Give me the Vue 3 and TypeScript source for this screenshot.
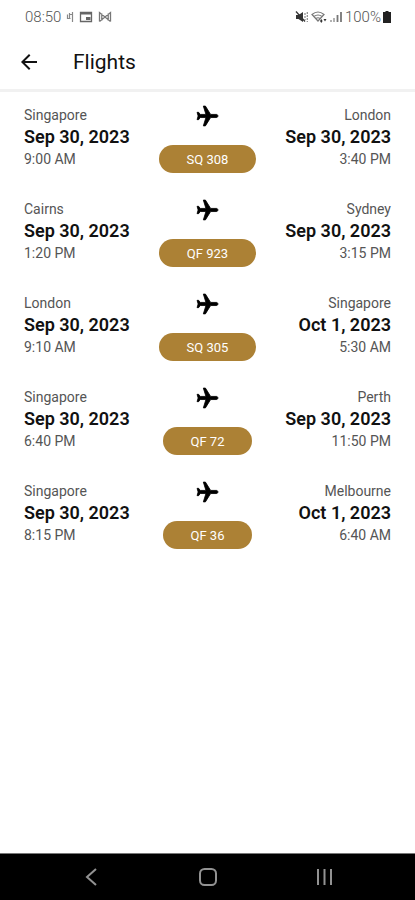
<script setup lang="ts">
interface Stop {
  city: string
  date: string
  time: string
}

interface Flight {
  code: string
  from: Stop
  to: Stop
}

const flights: Flight[] = [
  {
    code: 'SQ 308',
    from: { city: 'Singapore', date: 'Sep 30, 2023', time: '9:00 AM' },
    to: { city: 'London', date: 'Sep 30, 2023', time: '3:40 PM' },
  },
  {
    code: 'QF 923',
    from: { city: 'Cairns', date: 'Sep 30, 2023', time: '1:20 PM' },
    to: { city: 'Sydney', date: 'Sep 30, 2023', time: '3:15 PM' },
  },
  {
    code: 'SQ 305',
    from: { city: 'London', date: 'Sep 30, 2023', time: '9:10 AM' },
    to: { city: 'Singapore', date: 'Oct 1, 2023', time: '5:30 AM' },
  },
  {
    code: 'QF 72',
    from: { city: 'Singapore', date: 'Sep 30, 2023', time: '6:40 PM' },
    to: { city: 'Perth', date: 'Sep 30, 2023', time: '11:50 PM' },
  },
  {
    code: 'QF 36',
    from: { city: 'Singapore', date: 'Sep 30, 2023', time: '8:15 PM' },
    to: { city: 'Melbourne', date: 'Oct 1, 2023', time: '6:40 AM' },
  },
]
</script>

<template>
  <div class="screen">
    <div class="status">
      <div class="status-group">
        <span class="clock">08:50</span>
        <svg class="glyph-narrow" viewBox="0 0 8 14" aria-hidden="true">
          <path d="M1.500 4.500v4h3M3 4.500h3M6.500 2v10M3.500 3v5" fill="none" stroke="#888" stroke-width="1.200" />
        </svg>
        <svg class="glyph" viewBox="0 0 14 14" aria-hidden="true">
          <path d="M1.500 2.500h11v9h-11z" fill="none" stroke="#666" stroke-width="1.300" />
          <path d="M1 2h12v2.500H1zM7 7h4.500v3H7z" fill="#666" />
        </svg>
        <svg class="glyph" viewBox="0 0 14 14" aria-hidden="true">
          <path d="M1.500 11.500v-9L7 7l5.500-4.500v9M1.500 11.500L7 7l5.500 4.500M3.800 3.500v7M10.200 3.500v7" fill="none" stroke="#777" stroke-width="1.300" />
        </svg>
      </div>
      <div class="status-group right">
        <svg class="glyph" viewBox="0 0 14 14" aria-hidden="true">
          <path d="M1 5h2.500L8 2v10L3.500 9H1z" fill="#333" />
          <path d="M1 1.500l9 10" stroke="#333" stroke-width="1.300" />
          <path d="M10 3v7M12.300 2v10" fill="none" stroke="#888" stroke-width="1.200" stroke-dasharray="2 1" />
        </svg>
        <svg class="glyph-wide" viewBox="0 0 16 14" aria-hidden="true">
          <path d="M1 4.500Q7 -0.500 13 4.500L7 11zM3 6.500Q7 3.500 11 6.500M5 8.500Q7 7 9 8.500" fill="none" stroke="#777" stroke-width="1.200" />
          <path d="M9 11l1.300-2 1.300 2-1.300 2zM12.500 9h3l-1.500 2.500z" fill="#333" />
        </svg>
        <svg class="glyph" viewBox="0 0 14 14" aria-hidden="true">
          <path d="M2 12v-2M5 12V8" stroke="#999" stroke-width="1.500" />
          <path d="M8.500 12V5M12 12V2" stroke="#777" stroke-width="1.800" />
        </svg>
        <span class="battery-level">100%</span>
        <svg class="glyph-narrow" viewBox="0 0 8 14" aria-hidden="true">
          <path d="M2.500 1h3v1H8v11H0V2h2.500z" fill="#222" />
        </svg>
      </div>
    </div>

    <header class="app-bar">
      <button class="back" type="button" aria-label="Back">
        <svg viewBox="0 0 24 24" aria-hidden="true">
          <path d="M20 11H7.830l5.590-5.590L12 4l-8 8 8 8 1.410-1.410L7.830 13H20z" fill="#111" />
        </svg>
      </button>
      <h1>Flights</h1>
    </header>

    <main>
      <ul class="flights">
        <li v-for="flight in flights" :key="flight.code" class="flight">
          <div class="stop">
            <span>{{ flight.from.city }}</span>
            <strong>{{ flight.from.date }}</strong>
            <span>{{ flight.from.time }}</span>
          </div>
          <div class="middle">
            <svg class="plane" viewBox="0 0 24 24" aria-hidden="true">
              <path
                transform="rotate(90 12 12)"
                d="M21 16v-2l-8-5V3.500C13 2.670 12.330 2 11.500 2S10 2.670 10 3.500V9l-8 5v2l8-2.500V19l-2 1.500V22l3.500-1 3.500 1v-1.500L13 19v-5.500z"
              />
            </svg>
            <button class="code" type="button">{{ flight.code }}</button>
          </div>
          <div class="stop arrival">
            <span>{{ flight.to.city }}</span>
            <strong>{{ flight.to.date }}</strong>
            <span>{{ flight.to.time }}</span>
          </div>
        </li>
      </ul>
    </main>

    <nav class="system-nav" aria-label="System">
      <button type="button" aria-label="Back">
        <svg viewBox="0 0 24 24" aria-hidden="true">
          <path d="M17 4l-9 8 9 8" />
        </svg>
      </button>
      <button type="button" aria-label="Home">
        <svg viewBox="0 0 24 24" aria-hidden="true">
          <rect x="4" y="4" width="16" height="16" rx="4.500" />
        </svg>
      </button>
      <button type="button" aria-label="Recent apps">
        <svg viewBox="0 0 24 24" aria-hidden="true">
          <path d="M6 4v16M12.500 4v16M19 4v16" />
        </svg>
      </button>
    </nav>
  </div>
</template>

<style>
body {
  margin: 0;
  background: #fff;
}
</style>

<style scoped>
.screen {
  display: flex;
  flex-direction: column;
  min-height: 100vh;
  background: #fff;
  color: #111;
  font-family: Roboto, "Liberation Sans", sans-serif;
}

button {
  border: 0;
  padding: 0;
  background: none;
  font-family: inherit;
  cursor: pointer;
}

svg {
  display: block;
}

.status {
  display: flex;
  justify-content: space-between;
  align-items: center;
  height: 34px;
  padding: 0 24px 0 25px;
  color: #555;
  font-size: 15px;
  font-weight: 300;
}

.status-group {
  display: flex;
  align-items: center;
  gap: 5px;
}

.status-group.right {
  gap: 2px;
}

.glyph {
  width: 14px;
  height: 14px;
}

.glyph-narrow {
  width: 8px;
  height: 14px;
}

.glyph-wide {
  width: 16px;
  height: 14px;
}

.app-bar {
  display: flex;
  align-items: center;
  gap: 32px;
  height: 55px;
  padding: 0 17px;
  border-bottom: 3px solid #f1f1f1;
}

.back svg {
  width: 24px;
  height: 24px;
}

h1 {
  margin: 0;
  font-size: 21px;
  font-weight: 400;
}

main {
  flex: 1;
}

.flights {
  display: flex;
  flex-direction: column;
  gap: 24px;
  margin: 0;
  padding: 12px 24px;
  list-style: none;
}

.flight {
  display: grid;
  grid-template-columns: 1fr auto 1fr;
  height: 70px;
}

.stop {
  display: flex;
  flex-direction: column;
  color: #555;
  font-size: 14px;
  font-weight: 400;
  line-height: 22px;
}

.stop strong {
  color: #111;
  font-size: 18px;
  font-weight: 600;
}

.arrival {
  text-align: right;
}

.middle {
  display: flex;
  flex-direction: column;
  align-items: center;
  gap: 16px;
}

.plane {
  width: 25px;
  height: 25px;
  stroke: #000;
  stroke-width: 0.8;
}

.code {
  height: 28px;
  padding: 0 28px;
  border-radius: 14px;
  background: #ac8135;
  color: #fff;
  font-size: 13px;
  font-weight: 400;
}

.system-nav {
  display: flex;
  justify-content: space-between;
  align-items: center;
  height: 46px;
  padding: 0 79px;
  border-top: 1px solid #777;
  background: #000;
}

.system-nav svg {
  width: 24px;
  height: 24px;
  fill: none;
  stroke: #929292;
  stroke-width: 2;
}
</style>
